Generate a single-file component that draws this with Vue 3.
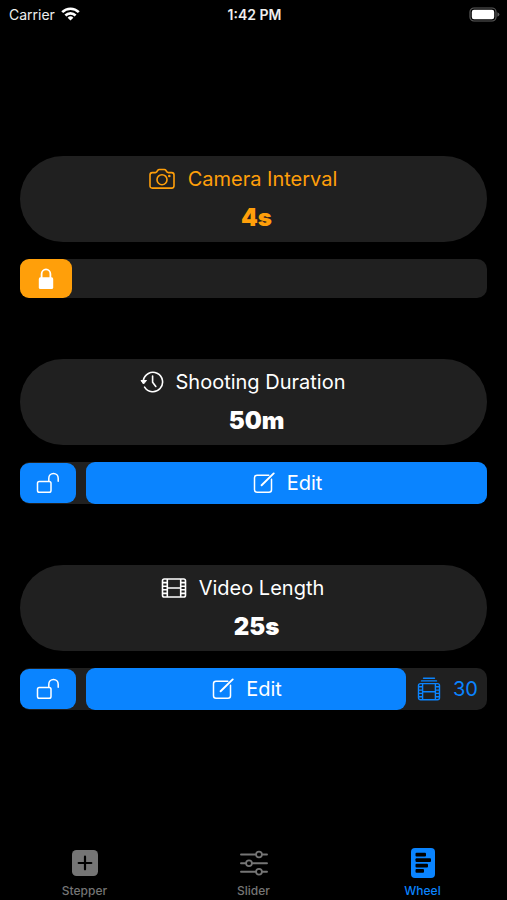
<script setup>
import { ref } from 'vue'

const tab = ref('Wheel')
const tabs = ['Stepper', 'Slider', 'Wheel']

const settings = [
  { id: 'interval', title: 'Camera Interval', value: '4s', locked: true },
  { id: 'duration', title: 'Shooting Duration', value: '50m', locked: false },
  { id: 'length', title: 'Video Length', value: '25s', locked: false, fps: 30 },
]
</script>

<template>
  <div class="screen">
    <header class="status">
      <div class="carrier">
        <span>Carrier</span>
        <svg width="19" height="14" viewBox="0 0 19 14" aria-hidden="true">
          <g fill="none" stroke="#fff" stroke-width="2.6">
            <path d="M1.2 5.2a11.8 11.8 0 0 1 16.6 0" />
            <path d="M4.4 8.5a7.2 7.2 0 0 1 10.2 0" />
          </g>
          <path d="M9.5 13.6 6.6 10.7a4.1 4.1 0 0 1 5.8 0z" fill="#fff" />
        </svg>
      </div>
      <time class="clock">1:42 PM</time>
      <div class="battery">
        <svg width="31" height="15" viewBox="0 0 31 15" aria-hidden="true">
          <rect x="1" y="1" width="26" height="13" rx="4" fill="none" stroke="#5c5c5c" stroke-width="1.2" />
          <rect x="2.8" y="2.8" width="22.4" height="9.4" rx="2.2" fill="#fff" />
          <path d="M28.4 5.2q2 .8 2 2.3t-2 2.3z" fill="#5c5c5c" />
        </svg>
      </div>
    </header>

    <main class="settings">
      <section v-for="s in settings" :key="s.id" class="setting" :class="{ locked: s.locked }">
        <div class="pill">
          <h2 class="title">
            <svg v-if="s.id === 'interval'" class="icon" width="28" height="24" viewBox="0 0 28 24" aria-hidden="true">
              <g fill="none" stroke="currentColor" stroke-width="1.6" stroke-linejoin="round">
                <path d="M4.3 5.6h3.1c.7 0 1-.2 1.4-.8l1-1.5c.4-.6.8-.8 1.5-.8h5c.7 0 1.1.2 1.5.8l1 1.5c.4.6.8.8 1.5.8h3.4c1.5 0 2.3.8 2.3 2.3v10.900c0 1.5-.8 2.300-2.300 2.300H4.300C2.800 21.100 2 20.300 2 18.800V7.900c0-1.500.8-2.300 2.300-2.300z" />
                <circle cx="14" cy="12.7" r="5" />
              </g>
              <circle cx="21.3" cy="9" r="1.3" fill="currentColor" />
            </svg>
            <svg v-else-if="s.id === 'duration'" class="icon" width="24" height="24" viewBox="0 0 24 24" aria-hidden="true">
              <g fill="none" stroke="currentColor" stroke-width="1.6" stroke-linecap="round" stroke-linejoin="round">
                <path d="M3.3 10.5a9.7 9.7 0 1 1 1.3 6.6" />
                <path d="M12.6 6v6.2l3.2 4.3" />
              </g>
              <path d="M1 10.500h5.500L3.500 14z" fill="currentColor" stroke="currentColor" stroke-linejoin="round" />
            </svg>
            <svg v-else class="icon" width="26" height="22" viewBox="0 0 26 22" aria-hidden="true">
              <g fill="none" stroke="currentColor" stroke-width="1.6">
                <rect x="1.5" y="2" width="23" height="18" rx="1.8" />
                <path d="M6.3 2v18M19.7 2v18M6.300 11h13.400" />
                <path d="M1.5 5.6h4.8M1.5 9.2h4.8M1.5 12.8h4.8M1.5 16.4h4.8M19.7 5.6h4.8M19.7 9.2h4.8M19.7 12.8h4.8M19.7 16.4h4.8" />
              </g>
            </svg>
            <span>{{ s.title }}</span>
          </h2>
          <p class="value">{{ s.value }}</p>
        </div>

        <div class="bar">
          <button class="lock" type="button" :aria-label="s.locked ? 'Unlock' : 'Lock'">
            <svg v-if="s.locked" width="16" height="22" viewBox="0 0 16 22" aria-hidden="true">
              <rect x=".8" y="9.3" width="14.4" height="11.7" rx="1.6" fill="#fff" />
              <path d="M3.6 10V6a4.4 4.6 0 0 1 8.8 0v4" fill="none" stroke="#fff" stroke-width="1.8" />
            </svg>
            <svg v-else width="24" height="22" viewBox="0 0 24 22" aria-hidden="true">
              <g fill="none" stroke="#fff" stroke-width="1.5" stroke-linecap="round">
                <rect x="1.5" y="9.5" width="13.5" height="10.8" rx="1.8" />
                <path d="M12.8 9.3V6.2a4.700 4.700 0 0 1 9.400 0v3" />
              </g>
            </svg>
          </button>
          <button v-if="!s.locked" class="edit" type="button">
            <svg width="22" height="22" viewBox="0 0 22 22" aria-hidden="true">
              <g fill="none" stroke="#fff" stroke-width="1.5" stroke-linecap="round" stroke-linejoin="round">
                <path d="M15.8 3.200H4Q1.500 3.200 1.500 5.700v12Q1.500 20.200 4 20.200h12q2.500 0 2.500-2.500V7.200" />
                <path d="M8.600 13.300 20.700 1.400" stroke-width="1.9" />
              </g>
            </svg>
            <span>Edit</span>
          </button>
          <button v-if="s.fps" class="fps" type="button" aria-label="Frames per second">
            <svg width="24" height="24" viewBox="0 0 24 24" aria-hidden="true">
              <g fill="none" stroke="currentColor" stroke-width="1.4">
                <path d="M6.500 1.200h11M4.500 3.900h15" stroke-linecap="round" />
                <rect x="1.5" y="6.6" width="21" height="16.2" rx="2" />
                <path d="M5.600 6.600v16.200M18.400 6.600v16.200M5.600 14.700h12.800" />
                <path d="M1.500 9.800h4.100M1.500 13.100h4.100M1.500 16.400h4.100M1.500 19.700h4.100M18.400 9.800h4.100M18.400 13.100h4.100M18.400 16.400h4.100M18.400 19.700h4.100" />
              </g>
            </svg>
            <span>{{ s.fps }}</span>
          </button>
        </div>
      </section>
    </main>

    <nav class="tabs">
      <button v-for="t in tabs" :key="t" type="button" class="tab" :class="{ active: t === tab }" @click="tab = t">
        <svg v-if="t === 'Stepper'" width="30" height="32" viewBox="0 0 30 32" aria-hidden="true">
          <rect x="2" y="3" width="26" height="26" rx="4.5" fill="currentColor" />
          <path d="M15 9.700v12.600M8.700 16h12.600" stroke="#000" stroke-width="2.2" stroke-linecap="round" />
        </svg>
        <svg v-else-if="t === 'Slider'" width="30" height="32" viewBox="0 0 30 32" aria-hidden="true">
          <path d="M2 7.500h26M2 16.200h26M2 24.800h26" stroke="currentColor" stroke-width="1.9" stroke-linecap="round" />
          <g fill="#000" stroke="currentColor" stroke-width="1.7">
            <circle cx="20" cy="7.5" r="2.9" />
            <circle cx="10" cy="16.2" r="2.9" />
            <circle cx="20" cy="24.8" r="2.9" />
          </g>
        </svg>
        <svg v-else width="30" height="32" viewBox="0 0 30 32" aria-hidden="true">
          <rect x="3" y="1" width="24" height="30" rx="4" fill="currentColor" />
          <g fill="#000">
            <rect x="7.500" y="5.8" width="10.500" height="3.700" rx="1" />
            <rect x="7.500" y="11.200" width="15.500" height="3.700" rx="1" />
            <rect x="7.500" y="16.700" width="12.500" height="3.700" rx="1" />
            <rect x="7.500" y="22.100" width="8.500" height="3.700" rx="1" />
          </g>
        </svg>
        <span>{{ t }}</span>
      </button>
    </nav>
  </div>
</template>

<style>
body {
  background: #000;
}
</style>

<style scoped>
.screen {
  min-height: 100vh;
  display: flex;
  flex-direction: column;
  background: #000;
  color: #fff;
  font-family: Inter, "Liberation Sans", sans-serif;
}

button {
  border: 0;
  margin: 0;
  padding: 0;
  font: inherit;
  color: inherit;
  background: none;
  cursor: pointer;
}

svg {
  display: block;
  flex: none;
}

.status {
  height: 28px;
  padding: 0 7px 0 9px;
  display: grid;
  grid-template-columns: 1fr auto 1fr;
  align-items: center;
  font-size: 14px;
  color: #eee;
}

.carrier {
  display: flex;
  align-items: center;
  gap: 6px;
}

.clock {
  font-weight: 600;
}

.battery {
  display: flex;
  justify-content: flex-end;
}

.settings {
  flex: 1;
  display: flex;
  flex-direction: column;
  justify-content: center;
  gap: 61px;
  padding: 0 20px;
}

.setting {
  display: flex;
  flex-direction: column;
  gap: 17px;
}

.pill {
  height: 86px;
  border-radius: 43px;
  background: #202020;
  display: flex;
  flex-direction: column;
  align-items: center;
  padding-top: 8px;
  box-sizing: border-box;
}

.title {
  margin: 0;
  padding-right: 22px;
  height: 30px;
  display: flex;
  align-items: center;
  gap: 12px;
  font-size: 20px;
  font-weight: 400;
}

.value {
  margin: 0;
  padding: 9px 0 0 6px;
  font-size: 24px;
  line-height: 30px;
  font-weight: 900;
}

.locked .pill {
  color: #ff9f0a;
}

.bar {
  height: 42px;
  display: flex;
  align-items: center;
  border-radius: 10px;
  background: #202020;
}

.locked .bar {
  height: 39px;
}

.lock {
  width: 56px;
  height: 40px;
  display: flex;
  align-items: center;
  justify-content: center;
  border-radius: 9px;
  background: #0a84ff;
}

.locked .lock {
  width: 52px;
  height: 39px;
  background: #ff9f0a;
}

.edit {
  flex: 1;
  align-self: stretch;
  margin-left: 10px;
  padding-left: 2px;
  display: flex;
  align-items: center;
  justify-content: center;
  gap: 12px;
  border-radius: 9px;
  background: #0a84ff;
  font-size: 20px;
}

.fps {
  width: 81px;
  padding-left: 2px;
  display: flex;
  align-items: center;
  justify-content: center;
  gap: 12px;
  color: #0a84ff;
  font-size: 20px;
}

.tabs {
  height: 62px;
  display: grid;
  grid-template-columns: repeat(3, 1fr);
}

.tab {
  display: flex;
  flex-direction: column;
  align-items: center;
  padding-top: 9px;
  gap: 5px;
  color: #757575;
  font-size: 12px;
  line-height: 14px;
  font-weight: 500;
}

.tab.active {
  color: #0a84ff;
}
</style>
